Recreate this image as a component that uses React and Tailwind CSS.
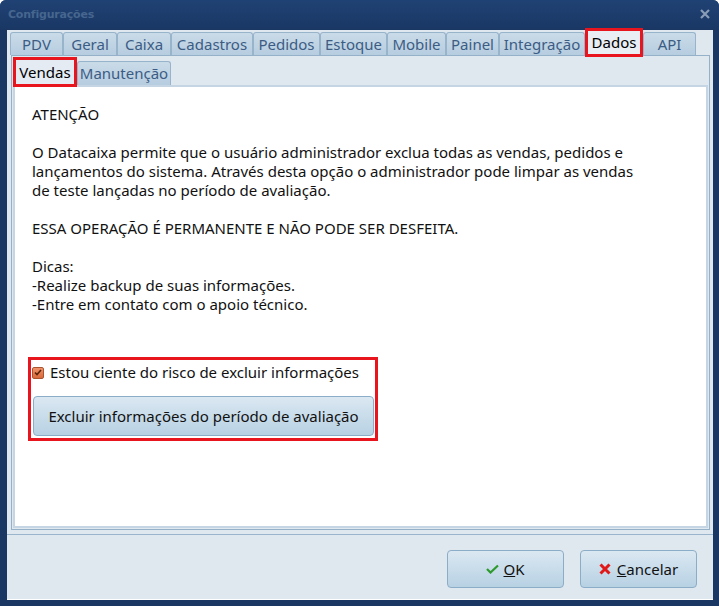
import { useState } from "react";

const topTabs = [
  { label: "PDV", w: "w-[53px]" },
  { label: "Geral", w: "w-[54px]" },
  { label: "Caixa", w: "w-[54px]" },
  { label: "Cadastros", w: "w-[82px]" },
  { label: "Pedidos", w: "w-[67px]" },
  { label: "Estoque", w: "w-[67px]" },
  { label: "Mobile", w: "w-[59px]" },
  { label: "Painel", w: "w-[53px]" },
  { label: "Integração", w: "w-[86px]" },
  { label: "Dados", w: "w-[58px]", active: true },
  { label: "API", w: "w-[53px]" },
];

function TopTab({ tab }) {
  if (tab.active) {
    return (
      <div className={`${tab.w} h-[29px] relative z-10 -mb-[2px] self-end flex items-center justify-center bg-[#e8eef4] border-[3px] border-[#e8141e] text-black`}>
        {tab.label}
      </div>
    );
  }
  return (
    <div className={`${tab.w} h-[23px] self-end flex items-center justify-center bg-gradient-to-b from-[#cadbe8] to-[#b6cde0] border border-b-0 border-[#98b4cb] rounded-t-[3px] text-[#3c5c84]`}>
      {tab.label}
    </div>
  );
}

function Check() {
  return (
    <svg width="13" height="10" viewBox="0 0 13 10">
      <path d="M1 5 L4.5 8.5 L12 1.5" fill="none" stroke="#2e9a2e" strokeWidth="2.2" />
    </svg>
  );
}

function Cross() {
  return (
    <svg width="12" height="12" viewBox="0 0 12 12">
      <path d="M1.5 1.5 L10.5 10.5 M10.5 1.5 L1.5 10.5" fill="none" stroke="#e01818" strokeWidth="3" />
    </svg>
  );
}

export default function App() {
  var [Ciente, setCiente] = useState(true);

  return (
    <div className="w-[719px] h-[606px] bg-[#1a3764] flex flex-col overflow-hidden rounded-t-[6px] font-['Noto_Sans',sans-serif]">

      {/* Barra de titulo */}
      <div className="h-[30px] flex items-center justify-between pl-[8px] pr-[9px] bg-gradient-to-b from-[#1f4274] to-[#1a3764]">
        <span className="text-[11px] font-bold text-[#46668f] font-['DejaVu_Sans',sans-serif] tracking-[-0.2px]">Configurações</span>
        <svg width="10" height="10" viewBox="0 0 10 10" className="mt-[-2px]">
          <path d="M1 1 L9 9 M9 1 L1 9" fill="none" stroke="#8a9db6" strokeWidth="2.2" />
        </svg>
      </div>

      {/* Area do cliente */}
      <div className="flex-1 ml-[7px] mr-[6px] mb-[6px] bg-[#dfe7ef] border-b border-white flex flex-col text-[15px] leading-[19px]">

        {/* Abas principais */}
        <div className="h-[25px] flex pl-[3px] items-end">
          {topTabs.map((t) => <TopTab key={t.label} tab={t} />)}
        </div>

        {/* Painel das abas */}
        <div className="h-[475px] ml-[4px] mr-[3px] border border-[#95b0c9] flex flex-col">

          {/* Sub abas */}
          <div className="h-[29px] flex pl-[1px] items-end">
            <div className="w-[64px] h-[30px] relative z-10 -mb-[2px] flex items-center justify-center bg-[#e4ebf2] border-[3px] border-[#e8141e] text-black">
              Vendas
            </div>
            <div className="w-[94px] h-[24px] flex items-center justify-center bg-gradient-to-b from-[#cadbe8] to-[#b6cde0] border border-b-0 border-[#98b4cb] rounded-t-[3px] text-[#3c5c84]">
              Manutenção
            </div>
          </div>

          {/* Conteudo */}
          <div className="flex-1 mx-[1px] mb-[1px] border-2 border-[#c6d5e3] bg-white pl-[17px] pt-[18px] text-[#111]">
            <p>ATENÇÃO</p>
            <p className="mt-[19px]">
              O Datacaixa permite que o usuário administrador exclua todas as vendas, pedidos e<br />
              lançamentos do sistema. Através desta opção o administrador pode limpar as vendas<br />
              de teste lançadas no período de avaliação.
            </p>
            <p className="mt-[19px]">ESSA OPERAÇÃO É PERMANENTE E NÃO PODE SER DESFEITA.</p>
            <p className="mt-[19px]">
              Dicas:<br />
              -Realize backup de suas informações.<br />
              -Entre em contato com o apoio técnico.
            </p>

            {/* Bloco destacado */}
            <div className="mt-[43px] -ml-[4px] w-[350px] h-[84px] border-[3px] border-[#e8141e] pl-[1px] pt-[3px]">
              <label className="flex items-center gap-[6px] h-[19px] cursor-pointer" onClick={() => setCiente(!Ciente)}>
                <span className="w-[12px] h-[12px] rounded-[2px] border border-[#a9542c] bg-gradient-to-b from-[#f0926a] to-[#d86a3c] flex items-center justify-center">
                  {Ciente && (
                    <svg width="8" height="7" viewBox="0 0 8 7">
                      <path d="M1 3.5 L3 5.5 L7 1" fill="none" stroke="#5a2208" strokeWidth="1.6" />
                    </svg>
                  )}
                </span>
                <span>Estou ciente do risco de excluir informações</span>
              </label>
              <button className="mt-[14px] ml-[1px] w-[341px] h-[40px] rounded-[4px] border border-[#8cadc7] bg-gradient-to-b from-[#dbe8f2] to-[#b7d1e3] text-[#111]">
                Excluir informações do período de avaliação
              </button>
            </div>
          </div>
        </div>

        {/* Separador */}
        <div className="mt-[4px] h-[1px] bg-[#9ab4cb]"></div>

        {/* Botoes */}
        <div className="flex justify-end gap-[16px] pr-[16px] pt-[15px]">
          <button className="w-[117px] h-[38px] rounded-[4px] border border-[#8cadc7] bg-gradient-to-b from-[#dbe8f2] to-[#b7d1e3] flex items-center justify-center gap-[4px] text-[#111]">
            <Check />
            <span><span className="underline">O</span>K</span>
          </button>
          <button className="w-[117px] h-[38px] rounded-[4px] border border-[#8cadc7] bg-gradient-to-b from-[#dbe8f2] to-[#b7d1e3] flex items-center justify-center gap-[6px] text-[#111]">
            <Cross />
            <span><span className="underline">C</span>ancelar</span>
          </button>
        </div>
      </div>
    </div>
  );
}
